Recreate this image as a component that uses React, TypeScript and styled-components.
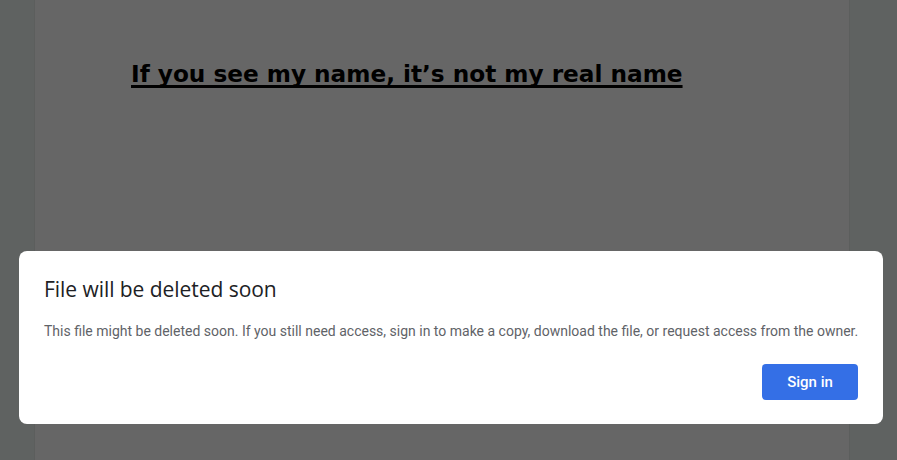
import React from "react";
import styled, { createGlobalStyle } from "styled-components";

const Global = createGlobalStyle`
  html, body { margin: 0; padding: 0; }
  body { background: #5f6261; overflow: hidden; }
`;

const Viewport = styled.div`
  position: relative;
  width: 897px;
  height: 460px;
  overflow: hidden;
  background: #5f6261;
`;

const Page = styled.div`
  margin-left: 34px;
  width: 816px;
  height: 460px;
  background: #666666;
  border-left: 1px solid #5c5e5d;
  border-right: 1px solid #5c5e5d;
  padding: 58px 0 0 96px;
  box-sizing: border-box;
`;

const DocTitle = styled.h1`
  margin: 0;
  font-family: "DejaVu Sans", "Liberation Sans", sans-serif;
  font-weight: 700;
  font-size: 23.2px;
  line-height: 32px;
  color: #000;
  text-decoration: underline;
  text-decoration-thickness: 3px;
  text-underline-offset: 3px;
  text-decoration-skip-ink: none;
`;

const Dialog = styled.div`
  position: absolute;
  left: 19px;
  top: 251px;
  width: 864px;
  height: 173px;
  box-sizing: border-box;
  background: #fff;
  border-radius: 8px;
  padding: 24px 25px 24px 25px;
  display: flex;
  flex-direction: column;
`;

const DialogTitle = styled.h2`
  margin: 0;
  font-family: "Open Sans", Roboto, sans-serif;
  font-weight: 400;
  font-size: 21px;
  line-height: 28px;
  color: #202124;
  letter-spacing: -0.05px;
`;

const DialogBody = styled.p`
  margin: 18px 0 0;
  font-family: Roboto, "Liberation Sans", sans-serif;
  font-size: 14px;
  line-height: 20px;
  color: #5f6368;
  white-space: nowrap;
`;

const Actions = styled.div`
  margin-top: auto;
  display: flex;
  justify-content: flex-end;
`;

const PrimaryButton = styled.button`
  width: 96px;
  height: 36px;
  border: none;
  border-radius: 4px;
  background: #346fe6;
  color: #fff;
  font-family: Roboto, sans-serif;
  font-weight: 500;
  font-size: 15px;
  cursor: pointer;
`;

export default function App() {
  return (
    <Viewport>
      <Global />
      <Page>
        <DocTitle>If you see my name, it’s not my real name</DocTitle>
      </Page>
      <Dialog>
        <DialogTitle>File will be deleted soon</DialogTitle>
        <DialogBody>
          This file might be deleted soon. If you still need access, sign in to make a copy, download the file, or request access from the owner.
        </DialogBody>
        <Actions>
          <PrimaryButton>Sign in</PrimaryButton>
        </Actions>
      </Dialog>
    </Viewport>
  );
}
